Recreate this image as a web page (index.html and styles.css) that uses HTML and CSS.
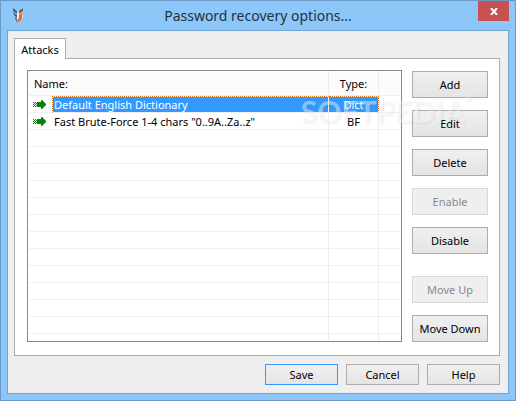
FILE: index.html
```html
<!DOCTYPE html>
<html lang="en">
<head>
  <meta charset="UTF-8">
  <title>Password recovery options...</title>
  <link rel="stylesheet" href="styles.css">
</head>
<body>
  <div class="window">
    <header class="titlebar">
      <svg class="app-icon" width="12" height="16" viewBox="0 0 12 16">
        <path d="M1 1l4 4v9l2 1 4-5V1L6 5z" fill="#dfe9f2"/>
        <path d="M1 1l4 3v3L1 4zM1 5l4 3v3L2 8zM11 1L7 4v3l4-3zM3 10l2 2v2l-2-2z" fill="#59606b"/>
        <path d="M11 5L7 8v3l3-2zM10 9l-4 3-2 4 4-2 2-3z" fill="#f06414"/>
      </svg>
      <h1>Password recovery options...</h1>
      <button class="close" aria-label="Close">
        <svg width="8" height="7" viewBox="0 0 8 7"><path d="M1 0l6 7M7 0L1 7" stroke="#fff" stroke-width="2"/></svg>
      </button>
    </header>

    <main class="client">
      <div class="tabs" role="tablist">
        <button class="tab" role="tab" aria-selected="true">Attacks</button>
      </div>
      <section class="panel">
        <div class="list">
          <table>
            <colgroup>
              <col class="col-icon"><col><col class="col-type"><col class="col-rest">
            </colgroup>
            <thead>
              <tr><th colspan="2">Name:</th><th class="type">Type:</th><th></th></tr>
            </thead>
            <tbody>
              <tr class="selected">
                <td class="icon"><svg width="13" height="9" viewBox="0 0 13 9"><path d="M0 2h1v1H0zM2 2h1v1H2zM1 3h1v1H1zM3 3h1v1H3zM0 4h1v1H0zM2 4h1v1H2zM1 5h1v1H1zM3 5h1v1H3zM0 6h1v1H0zM2 6h1v1H2zM4 2h4V0h1l4 4v1L9 9H8V7H4z" fill="#078207"/></svg></td>
                <td class="name">Default English Dictionary</td><td class="type">Dict</td><td></td>
              </tr>
              <tr>
                <td class="icon"><svg width="13" height="9" viewBox="0 0 13 9"><path d="M0 2h1v1H0zM2 2h1v1H2zM1 3h1v1H1zM3 3h1v1H3zM0 4h1v1H0zM2 4h1v1H2zM1 5h1v1H1zM3 5h1v1H3zM0 6h1v1H0zM2 6h1v1H2zM4 2h4V0h1l4 4v1L9 9H8V7H4z" fill="#078207"/></svg></td>
                <td class="name">Fast Brute-Force 1-4 chars "0..9A..Za..z"</td><td class="type">BF</td><td></td>
              </tr>
              <tr><td></td><td class="name"></td><td class="type"></td><td></td></tr>
              <tr><td></td><td class="name"></td><td class="type"></td><td></td></tr>
              <tr><td></td><td class="name"></td><td class="type"></td><td></td></tr>
              <tr><td></td><td class="name"></td><td class="type"></td><td></td></tr>
              <tr><td></td><td class="name"></td><td class="type"></td><td></td></tr>
              <tr><td></td><td class="name"></td><td class="type"></td><td></td></tr>
              <tr><td></td><td class="name"></td><td class="type"></td><td></td></tr>
              <tr><td></td><td class="name"></td><td class="type"></td><td></td></tr>
              <tr><td></td><td class="name"></td><td class="type"></td><td></td></tr>
              <tr><td></td><td class="name"></td><td class="type"></td><td></td></tr>
              <tr><td></td><td class="name"></td><td class="type"></td><td></td></tr>
              <tr><td></td><td class="name"></td><td class="type"></td><td></td></tr>
              <tr class="tail"><td></td><td class="name"></td><td class="type"></td><td></td></tr>
            </tbody>
          </table>
        </div>
        <div class="actions">
          <button>Add</button>
          <button>Edit</button>
          <button>Delete</button>
          <button disabled>Enable</button>
          <button>Disable</button>
          <button class="move" disabled>Move Up</button>
          <button>Move Down</button>
        </div>
        <div class="watermark">SOFTPEDIA<sup>®</sup></div>
      </section>
      <footer class="buttons">
        <button class="save">Save</button>
        <button>Cancel</button>
        <button>Help</button>
      </footer>
    </main>
  </div>
</body>
</html>
```
FILE: styles.css
```css
* {
  box-sizing: border-box;
}
body {
  margin: 0;
  font-family: "Noto Sans", "Open Sans", sans-serif;
  font-size: 11px;
  color: #000;
}
button {
  font: inherit;
  color: #000;
  padding: 0;
  border: 1px solid #acacac;
  background: linear-gradient(#f0f0f0, #e4e4e4);
}
button:disabled {
  color: #8a8a8a;
  border-color: #d9d9d9;
  background: #efefef;
}
.window {
  display: flex;
  flex-direction: column;
  min-height: 100vh;
  padding: 0 6px 6px;
  border: 1px solid #6b9ac4;
  background: #8dc7f9;
}

/* title bar */
.titlebar {
  display: flex;
  align-items: flex-start;
  height: 29px;
}
.app-icon {
  margin: 6px 0 0 5px;
}
h1 {
  flex: 1;
  margin: 0 0 0 14px;
  font-size: 14px;
  font-weight: normal;
  line-height: 30px;
  color: #26303c;
  text-align: center;
}
.close {
  display: flex;
  align-items: center;
  justify-content: center;
  width: 31px;
  height: 20px;
  border: 0;
  background: #c75050;
}

.client {
  flex: 1;
  padding: 7px 8px 7px 6px;
  border: 1px solid #72a5d2;
  background: #efefef;
}
.tab {
  display: block;
  position: relative;
  z-index: 1;
  width: 52px;
  height: 21px;
  margin-bottom: -1px;
  border-bottom: 0;
  background: #fff;
}
.panel {
  display: flex;
  gap: 10px;
  position: relative;
  padding: 11px 11px 13px 12px;
  border: 1px solid #acacac;
  background: #fff;
}

/* attack list */
.list {
  flex: 1;
  padding: 0 1px;
  border: 1px solid #828790;
}
table {
  width: 100%;
  table-layout: fixed;
  border-collapse: separate;
  border-spacing: 0;
}
.col-icon {
  width: 23px;
}
.col-type {
  width: 50px;
}
.col-rest {
  width: 21px;
}
th {
  height: 25px;
  padding: 0 5px;
  font-weight: normal;
  text-align: left;
  border-bottom: 1px solid #e5effa;
  border-right: 1px solid #e5effa;
  background: #fcfcfc;
}
th:last-child {
  border-right: 0;
}
td {
  height: 17px;
  padding: 0;
  line-height: 15px;
  white-space: nowrap;
  border-bottom: 1px solid #efefef;
}
td.name,
td.type {
  border-right: 1px solid #efefef;
}
td.name {
  padding-left: 2px;
}
.type {
  padding: 0;
  text-align: center;
}
.icon svg {
  display: block;
  margin-left: 4px;
}
.selected .name,
.selected .type {
  color: #fff;
  background: #3399ff;
  background-clip: padding-box;
  border-top: 1px dotted #d0711b;
}
.selected .type {
  border-right: 1px dotted #d0711b;
}
.selected .name {
  padding-left: 1px;
  border-left: 1px dotted #d0711b;
}
.tail td {
  height: 7px;
  border-bottom: 0;
}

.actions {
  display: flex;
  flex-direction: column;
  gap: 12px;
  width: 76px;
  padding-top: 1px;
}
.actions button {
  height: 27px;
}
.actions .move {
  margin-top: 10px;
}
.watermark {
  position: absolute;
  top: 33px;
  right: 26px;
  font: bold 30px/38px Lato, sans-serif;
  color: rgba(255, 255, 255, 0.45);
  text-shadow: 1px 1px 2px rgba(0, 0, 0, 0.07);
  pointer-events: none;
}
.watermark sup {
  font-size: 10px;
  line-height: 10px;
  vertical-align: top;
}

.buttons {
  display: flex;
  justify-content: flex-end;
  gap: 8px;
  padding-top: 8px;
}
.buttons button {
  width: 73px;
  height: 21px;
}
.buttons .save {
  border: 1px solid #3399ff;
}
```
